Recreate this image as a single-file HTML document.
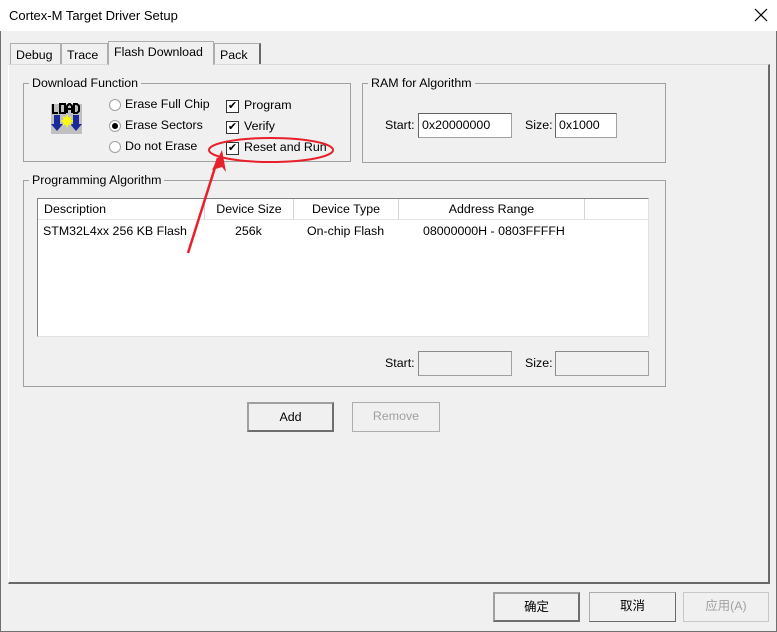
<!DOCTYPE html>
<html><head><meta charset="utf-8"><style>
*{box-sizing:border-box;margin:0;padding:0}
body{width:777px;height:632px;overflow:hidden;background:#f0f0f0;font-family:"Liberation Sans","Noto Sans CJK SC",sans-serif;font-size:12.4px;color:#000;position:relative}
.a{position:absolute}
.win{left:0;top:0;width:777px;height:632px;border:1px solid #707070;border-top:none}
.title{left:0;top:0;width:777px;height:31px;background:#fff}
.grp{border:1px solid #a0a0a0;}
.lg{background:#f0f0f0;padding:0 3px;line-height:14px}
.tab{border:1px solid #adadad;border-bottom:none;background:#f0f0f0;padding:3px 5px 0;height:21px;line-height:16px}
.field{background:#fff;border:1px solid #a0a0a0;border-top-color:#646464;border-left-color:#646464;padding:1px 3px;line-height:20px}
.dis{background:#f0f0f0;border:1px solid #a0a0a0;border-top-color:#8a8a8a;border-left-color:#8a8a8a}
.btn{border:1px solid #adadad;border-right-color:#696969;border-bottom-color:#696969;background:#f0f0f0;text-align:center;line-height:27px}
.btnd{border:2px solid #6e6e6e;border-top-color:#a0a0a0;border-left-color:#a0a0a0}
.cb{width:13px;height:13px;border:1px solid #333;background:#fff;font-size:11px;line-height:11px;text-align:center}
.rb{width:12px;height:12px;border:1px solid #a0a0a0;border-radius:50%;background:#fff}
.hd{border-right:1px solid #d5d5d5;border-bottom:1px solid #e5e5e5;height:21px;line-height:20px;top:0}
</style></head><body>
<div class="a win"></div>
<div class="a title"></div>
<div class="a" style="left:9px;top:8px;font-size:13px">Cortex-M Target Driver Setup</div>
<svg class="a" style="left:754px;top:8px" width="14" height="14"><path d="M1 1L13 13M13 1L1 13" stroke="#000" stroke-width="1.2"/></svg>

<div class="a" style="left:8px;top:64px;width:762px;height:520px;border:1px solid #fff;border-right:2px solid #696969;border-bottom:2px solid #696969;border-top-color:#d9d9d9"></div>
<div class="a tab" style="left:10px;top:43px;width:51px">Debug</div>
<div class="a tab" style="left:61px;top:43px;width:47px">Trace</div>
<div class="a tab" style="left:108px;top:41px;width:106px;height:24px;border-bottom:none;z-index:2;background:#f0f0f0;padding-top:2px">Flash Download</div>
<div class="a tab" style="left:214px;top:43px;width:47px;border-right:2px solid #696969">Pack</div>

<div class="a grp" style="left:23px;top:83px;width:328px;height:79px"></div>
<div class="a lg" style="left:29px;top:76px">Download Function</div>
<div class="a" style="left:51px;top:104px;width:31px;height:30px;background:#c0c0c0"></div>
<svg class="a" style="left:51px;top:103px" width="31" height="32">
<g fill="none" stroke="#000" stroke-width="2">
<path d="M2 1v9h5"/><rect x="9" y="1" width="5" height="9"/><path d="M16 10V3l2-2h1l2 2v7M16 6h5"/><path d="M23 1v9h3l2-2V3l-2-2z"/></g>
<path d="M3 12h6v9h3l-6 7-6-7h3z" fill="#1a2a9a"/><path d="M22 12h6v9h3l-6 7-6-7h3z" fill="#1a2a9a"/><circle cx="16" cy="18" r="4" fill="#ffff00"/><path d="M16 12v12M10 18h12M12 14l8 8M20 14l-8 8" stroke="#ffff00" stroke-width="1.5"/></svg>
<div class="a rb" style="left:109px;top:99px"></div><div class="a" style="left:125px;top:97px">Erase Full Chip</div>
<div class="a rb" style="left:109px;top:120px"></div><div class="a" style="left:112px;top:123px;width:6px;height:6px;border-radius:50%;background:#000"></div><div class="a" style="left:125px;top:118px">Erase Sectors</div>
<div class="a rb" style="left:109px;top:141px"></div><div class="a" style="left:125px;top:139px">Do not Erase</div>
<div class="a cb" style="left:226px;top:100px">✔</div><div class="a" style="left:244px;top:98px">Program</div>
<div class="a cb" style="left:226px;top:121px">✔</div><div class="a" style="left:244px;top:119px">Verify</div>
<div class="a cb" style="left:226px;top:142px">✔</div><div class="a" style="left:244px;top:140px">Reset and Run</div>

<div class="a grp" style="left:362px;top:83px;width:304px;height:80px"></div>
<div class="a lg" style="left:368px;top:76px">RAM for Algorithm</div>
<div class="a" style="left:385px;top:118px">Start:</div>
<div class="a field" style="left:418px;top:113px;width:94px;height:25px">0x20000000</div>
<div class="a" style="left:525px;top:118px">Size:</div>
<div class="a field" style="left:555px;top:113px;width:62px;height:25px">0x1000</div>

<div class="a grp" style="left:23px;top:180px;width:643px;height:207px"></div>
<div class="a lg" style="left:29px;top:173px">Programming Algorithm</div>
<div class="a" style="left:37px;top:198px;width:612px;height:139px;background:#fff;border:1px solid #828282;border-right-color:#e0e0e0;border-bottom-color:#e0e0e0;overflow:hidden">
 <div class="a hd" style="left:0;width:167px;padding-left:6px">Description</div>
 <div class="a hd" style="left:167px;width:89px;text-align:center">Device Size</div>
 <div class="a hd" style="left:256px;width:105px;text-align:center">Device Type</div>
 <div class="a hd" style="left:361px;width:186px;text-align:center">Address Range</div>
 <div class="a hd" style="left:547px;width:70px"></div>
 <div class="a" style="left:5px;top:25px">STM32L4xx 256 KB Flash</div>
 <div class="a" style="left:197px;top:25px">256k</div>
 <div class="a" style="left:269px;top:25px">On-chip Flash</div>
 <div class="a" style="left:385px;top:25px">08000000H - 0803FFFFH</div>
</div>
<div class="a" style="left:385px;top:356px">Start:</div>
<div class="a dis" style="left:418px;top:351px;width:94px;height:25px"></div>
<div class="a" style="left:525px;top:356px">Size:</div>
<div class="a dis" style="left:555px;top:351px;width:94px;height:25px"></div>

<div class="a btn btnd" style="left:247px;top:402px;width:87px;height:30px;line-height:26px">Add</div>
<div class="a btn" style="left:352px;top:402px;width:88px;height:30px;color:#a0a0a0;border-color:#adadad">Remove</div>

<div class="a btn btnd" style="left:493px;top:592px;width:87px;height:30px;line-height:26px">确定</div>
<div class="a btn" style="left:589px;top:592px;width:87px;height:30px">取消</div>
<div class="a btn" style="left:683px;top:592px;width:86px;height:30px;color:#a0a0a0;border-color:#c8c8c8">应用(A)</div>

<svg class="a" style="left:0;top:0" width="777" height="632">
<ellipse cx="271" cy="150" rx="62" ry="12" fill="none" stroke="#e8202a" stroke-width="2"/>
<path d="M188 253L218 158" stroke="#e8202a" stroke-width="2.5"/>
<path d="M222 150L212 170L222 167L226 172z" fill="#e8202a"/>
</svg>
</body></html>
